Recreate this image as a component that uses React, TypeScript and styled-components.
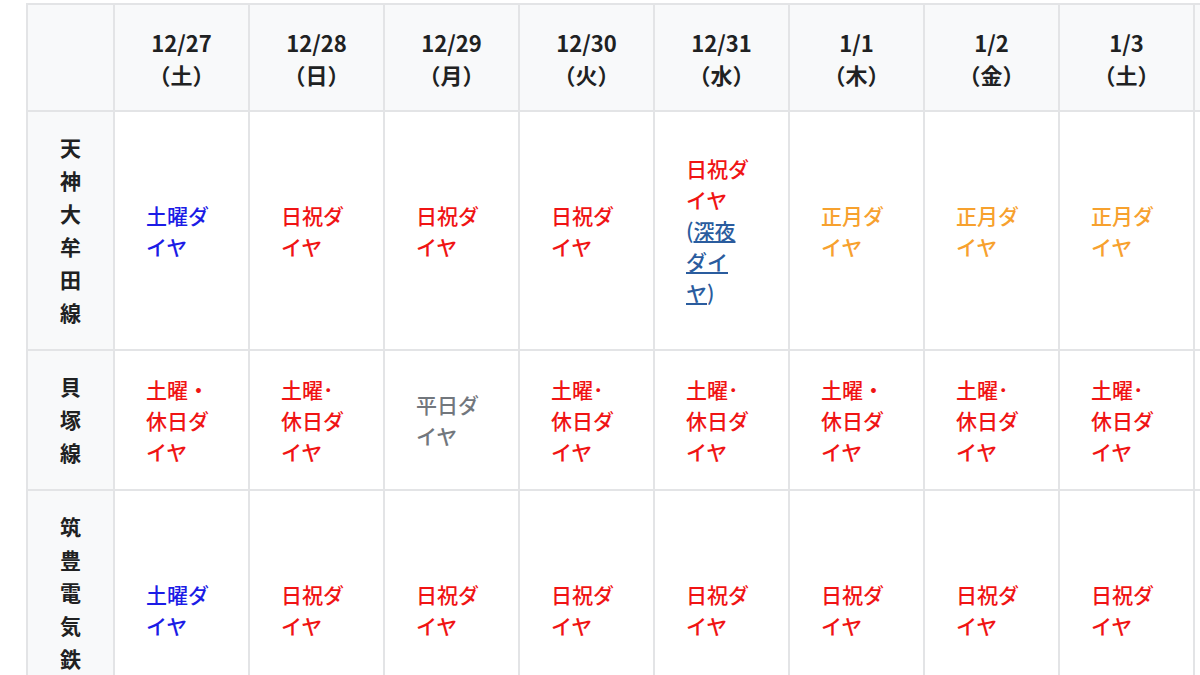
import React from 'react'
import styled, { createGlobalStyle } from 'styled-components'

const GlobalStyle = createGlobalStyle`
  html, body {
    margin: 0;
    background: #fff;
    overflow: hidden;
  }
  body {
    font-family: "Noto Sans CJK JP", "Noto Sans", sans-serif;
    color: #202122;
  }
`

const Page = styled.div`
  padding: 3px 0 0 26px;
  width: 1400px;
`

const Table = styled.table`
  border-collapse: collapse;
  table-layout: fixed;
  font-size: 21px;
`

const HeadCell = styled.th`
  background: #f8f9fa;
  border: 2px solid #e3e4e6;
  font-weight: 700;
  text-align: center;
  vertical-align: middle;
  line-height: 32px;
  padding: 21px 8px 20px;
  width: 135px;
  box-sizing: border-box;
  font-size: 22px;
`

const Corner = styled(HeadCell)`
  width: 87px;
`

const RowHead = styled.th`
  background: #f8f9fa;
  border: 2px solid #e3e4e6;
  font-weight: 700;
  text-align: center;
  vertical-align: middle;
  line-height: 33px;
  padding: 19px 32px 20px;
  width: 87px;
  box-sizing: border-box;
  word-break: break-all;
`

type Kind = 'sat' | 'hol' | 'ny' | 'week'

const colors: Record<Kind, string> = {
  sat: '#1c1ce6',
  hol: '#f01414',
  ny: '#f7a12e',
  week: '#72777d',
}

const Cell = styled.td<{ $kind: Kind }>`
  border: 2px solid #e3e4e6;
  color: ${(p) => colors[p.$kind]};
  font-weight: 500;
  text-align: left;
  vertical-align: middle;
  line-height: 31px;
  padding: 0 36px 0 31px;
  box-sizing: border-box;
  word-break: break-all;
`

const Link = styled.a`
  color: #2a5c9e;
  text-decoration: underline;
`

const Paren = styled.span`
  color: #2a5c9e;
`

const days = [
  ['12/27', '（土）'],
  ['12/28', '（日）'],
  ['12/29', '（月）'],
  ['12/30', '（火）'],
  ['12/31', '（水）'],
  ['1/1', '（木）'],
  ['1/2', '（金）'],
  ['1/3', '（土）'],
  ['1/4', '（日）'],
]

const rows: { name: string; cells: Kind[]; text: (k: Kind, i: number) => string }[] = [
  {
    name: '天神大牟田線',
    cells: ['sat', 'hol', 'hol', 'hol', 'hol', 'ny', 'ny', 'ny', 'hol'],
    text: (k) => (k === 'sat' ? '土曜ダイヤ' : k === 'ny' ? '正月ダイヤ' : '日祝ダイヤ'),
  },
  {
    name: '貝塚線',
    cells: ['hol', 'hol', 'week', 'hol', 'hol', 'hol', 'hol', 'hol', 'hol'],
    text: (k, i) =>
      k === 'week' ? '平日ダイヤ' : i === 0 || i === 5 ? '土曜・休日ダイヤ' : '土曜･休日ダイヤ',
  },
  {
    name: '筑豊電気鉄道',
    cells: ['sat', 'hol', 'hol', 'hol', 'hol', 'hol', 'hol', 'hol', 'hol'],
    text: (k) => (k === 'sat' ? '土曜ダイヤ' : '日祝ダイヤ'),
  },
]

export default function App() {
  return (
    <Page>
      <GlobalStyle />
      <Table>
        <thead>
          <tr>
            <Corner />
            {days.map(([d, w]) => (
              <HeadCell key={d}>
                {d}
                <br />
                {w}
              </HeadCell>
            ))}
          </tr>
        </thead>
        <tbody>
          {rows.map((r, ri) => (
            <tr key={r.name}>
              <RowHead>{r.name}</RowHead>
              {r.cells.map((k, ci) => (
                <Cell key={ci} $kind={k}>
                  {r.text(k, ci)}
                  {ri === 0 && ci === 4 && (
                    <>
                      <br />
                      <Paren>(</Paren>
                      <Link href="#">深夜ダイヤ</Link>
                      <Paren>)</Paren>
                    </>
                  )}
                </Cell>
              ))}
            </tr>
          ))}
        </tbody>
      </Table>
    </Page>
  )
}
